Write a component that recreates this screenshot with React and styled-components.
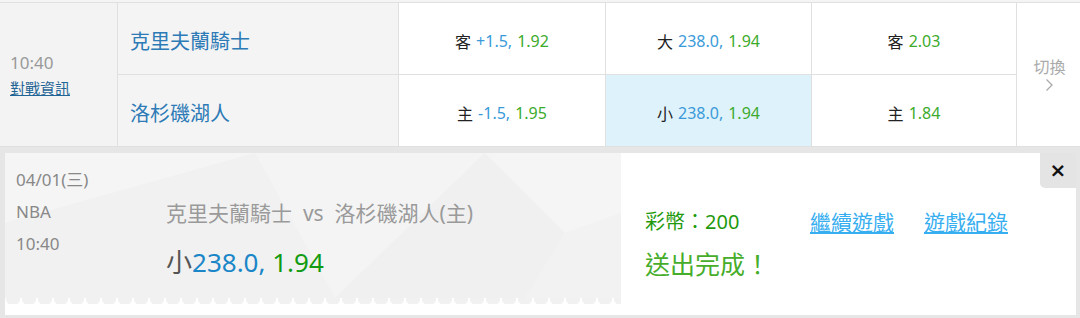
import React from "react";
import styled, { createGlobalStyle } from "styled-components";

const GlobalStyle = createGlobalStyle`
  body {
    margin: 0;
    background: #e6e6e6;
    font-family: "Noto Sans", "Noto Sans CJK TC", sans-serif;
  }
`;

const Page = styled.div`
  width: 1080px;
  height: 318px;
  background: #e6e6e6;
  overflow: hidden;
`;

const Board = styled.div`
  display: grid;
  grid-template-columns: 117px 280px 206px 205px 204px 1fr;
  grid-template-rows: 71px 71px;
  gap: 1px;
  padding: 1px 0;
  border-top: 2px solid #f4f4f4;
  background: #e0e0e0;
`;

const TimeCell = styled.div`
  grid-row: span 2;
  background: #f3f3f3;
  display: flex;
  flex-direction: column;
  justify-content: center;
  padding-left: 10px;
`;

const Time = styled.div`
  font-size: 17px;
  line-height: 22px;
  color: #999;
  margin-bottom: 4px;
`;

const InfoLink = styled.a`
  font-size: 15px;
  line-height: 20px;
  color: #1f6596;
  text-decoration: underline;
`;

const TeamCell = styled.div`
  background: #f4f4f4;
  display: flex;
  align-items: center;
  padding: 3px 0 0 12px;
  font-size: 20px;
  color: #2c7ab6;
`;

const OddsCell = styled.div`
  background: ${(p) => (p.$active ? "#def2fb" : "#fff")};
  display: flex;
  align-items: center;
  justify-content: center;
  gap: 5px;
  padding-top: 4px;
  font-size: 16px;
  color: #222;
`;

const Blue = styled.span`
  color: ${(p) => p.$c || "#3a9ad9"};
`;

const Green = styled.span`
  color: ${(p) => p.$c || "#3cab2c"};
`;

const SwitchCell = styled.div`
  grid-row: span 2;
  background: #fff;
  display: flex;
  flex-direction: column;
  align-items: center;
  justify-content: center;
  color: #aaa;
  font-size: 16px;
  line-height: 22px;
  padding: 0 0 2px 2px;
`;

const Popup = styled.div`
  position: relative;
  display: flex;
  height: 162px;
  margin: 6px 4px 0 5px;
  background: #fff;
`;

const Ticket = styled.div`
  position: relative;
  width: 616px;
  height: 145px;
  background: #f2f2f2;
  display: flex;

  &::after {
    content: "";
    position: absolute;
    left: 0;
    right: 0;
    bottom: -6px;
    height: 6px;
    background: radial-gradient(circle at 8px 0, #f1f1f1 7px, transparent 7.5px) 0 0 / 16px 6px repeat-x;
  }
`;

const Pattern = styled.svg`
  position: absolute;
  inset: 0;
  width: 100%;
  height: 100%;
`;

const Meta = styled.div`
  position: relative;
  width: 150px;
  padding: 11px 0 0 11px;
  font-size: 17px;
  line-height: 32px;
  color: #888;
`;

const Main = styled.div`
  position: relative;
  padding-top: 45px;
`;

const Matchup = styled.div`
  font-size: 21px;
  line-height: 30px;
  color: #9a9a9a;
  white-space: pre;
`;

const Bet = styled.div`
  margin-top: 19px;
  font-size: 26px;
  line-height: 30px;
  color: #555;
  white-space: pre;
`;

const Result = styled.div`
  padding: 54px 0 0 24px;
`;

const ResultRow = styled.div`
  display: flex;
  align-items: center;
`;

const Coins = styled.div`
  width: 165px;
  font-size: 20px;
  line-height: 30px;
  color: #1f9a0e;
`;

const ActionLink = styled.a`
  font-size: 21px;
  line-height: 30px;
  color: #36aef0;
  text-decoration: underline;
  margin-right: 30px;
`;

const Done = styled.div`
  margin-top: 11px;
  font-size: 25px;
  line-height: 32px;
  color: #46ad2a;
`;

const Close = styled.button`
  position: absolute;
  top: 0;
  right: 0;
  width: 36px;
  height: 35px;
  border: 0;
  padding: 0 0 2px;
  background: #e4e4e4;
  border-bottom-left-radius: 5px;
  font-family: "DejaVu Sans", sans-serif;
  font-size: 20px;
  font-weight: bold;
  color: #111;
`;

export default function App() {
  return (
    <Page>
      <GlobalStyle />
      <Board>
        <TimeCell>
          <Time>10:40</Time>
          <InfoLink>對戰資訊</InfoLink>
        </TimeCell>
        <TeamCell>克里夫蘭騎士</TeamCell>
        <OddsCell>
          <span>客</span>
          <Blue>+1.5,</Blue>
          <Green>1.92</Green>
        </OddsCell>
        <OddsCell>
          <span>大</span>
          <Blue>238.0,</Blue>
          <Green>1.94</Green>
        </OddsCell>
        <OddsCell>
          <span>客</span>
          <Green>2.03</Green>
        </OddsCell>
        <SwitchCell>
          切換
          <svg width="9" height="14" viewBox="0 0 9 14">
            <path d="M1.5 1.5 L7 7 L1.5 12.5" fill="none" stroke="#aaa" strokeWidth="1.3" />
          </svg>
        </SwitchCell>
        <TeamCell>洛杉磯湖人</TeamCell>
        <OddsCell>
          <span>主</span>
          <Blue>-1.5,</Blue>
          <Green>1.95</Green>
        </OddsCell>
        <OddsCell $active>
          <span>小</span>
          <Blue>238.0,</Blue>
          <Green>1.94</Green>
        </OddsCell>
        <OddsCell>
          <span>主</span>
          <Green>1.84</Green>
        </OddsCell>
      </Board>
      <Popup>
        <Ticket>
          <Pattern viewBox="0 0 616 145" preserveAspectRatio="none">
            <polygon points="0,0 250,0 0,70" fill="#f5f5f5" />
            <polygon points="0,70 250,0 330,145 0,145" fill="#f1f1f1" />
            <polygon points="250,0 480,0 330,145" fill="#f4f4f4" />
            <polygon points="330,145 480,0 560,80 520,145" fill="#f0f0f0" />
            <polygon points="480,0 616,0 616,60 560,80" fill="#f5f5f5" />
            <polygon points="560,80 616,60 616,145 520,145" fill="#f2f2f2" />
          </Pattern>
          <Meta>
            <div>04/01(三)</div>
            <div>NBA</div>
            <div>10:40</div>
          </Meta>
          <Main>
            <Matchup>克里夫蘭騎士  vs  洛杉磯湖人(主)</Matchup>
            <Bet>
              小<Blue $c="#1a86c8">238.0,</Blue> <Green $c="#139c12">1.94</Green>
            </Bet>
          </Main>
        </Ticket>
        <Result>
          <ResultRow>
            <Coins>彩幣：200</Coins>
            <ActionLink>繼續遊戲</ActionLink>
            <ActionLink>遊戲紀錄</ActionLink>
          </ResultRow>
          <Done>送出完成！</Done>
        </Result>
        <Close>×</Close>
      </Popup>
    </Page>
  );
}
